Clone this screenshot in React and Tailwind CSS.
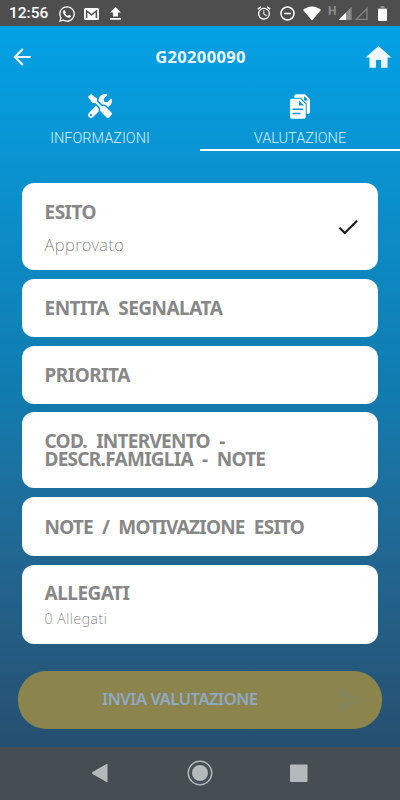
import { MdArrowBack, MdHome, MdCheck, MdSend, MdAlarm } from 'react-icons/md';
import { FaTools, FaWhatsapp } from 'react-icons/fa';

const cards = [
  { title: 'ESITO', text: 'Approvato', height: 'h-[87px]', checked: true, spacing: 'tracking-[-0.5px]' },
  { title: 'ENTITA SEGNALATA', height: 'h-[58px]', spacing: 'tracking-[-0.5px]' },
  { title: 'PRIORITA', height: 'h-[58px]', spacing: 'tracking-[-0.5px]' },
  { title: 'COD. INTERVENTO -\nDESCR.FAMIGLIA - NOTE', height: 'h-[76px]', spacing: 'tracking-[-0.72px]' },
  { title: 'NOTE / MOTIVAZIONE ESITO', height: 'h-[59px]', spacing: 'tracking-[-0.78px]' },
  { title: 'ALLEGATI', text: '0 Allegati', height: 'h-[79px]', small: true, spacing: 'tracking-[-0.5px]' },
];

function StatusBar() {
  return (
    <div className="h-[26px] shrink-0 bg-[#4e4e4e] text-white flex items-center justify-between pl-[9px] pr-[13px]">
      <div className="flex items-center">
        <span className="w-[49px] font-['Roboto',sans-serif] font-medium text-[15.500px] leading-none pt-[2px]">12:56</span>
        <FaWhatsapp size={18} className="mt-px" />
        <svg width="15" height="12" viewBox="0 0 15 12" className="ml-[8px] mt-px">
          <rect width="15" height="12" rx="1.5" fill="#fff" />
          <path d="M2.600 10V3l4.900 3.800L12.400 3v7" fill="none" stroke="#4e4e4e" strokeWidth="1.500" />
        </svg>
        <svg width="11" height="13" viewBox="0 0 11 13" fill="#fff" className="ml-[11px]">
          <path d="M5.5 0 11 5.5H8V9.5H3V5.5H0zM0 11h11v1.7H0z" />
        </svg>
      </div>
      <div className="flex items-center">
        <MdAlarm size={16} />
        <svg width="15" height="15" viewBox="0 0 15 15" fill="none" stroke="#fff" strokeWidth="1.5" className="ml-[8px]">
          <circle cx="7.5" cy="7.5" r="6.5" />
          <path d="M4 7.5h7" />
        </svg>
        <svg width="18" height="15" viewBox="0 0 18 15" fill="#fff" className="ml-[8px]">
          <path d="M0 4C5-.7 13-.7 18 4L9 14.5z" />
        </svg>
        <span className="ml-[7px] mb-[5px] w-[9px] font-['Roboto',sans-serif] font-bold text-[12px] leading-none text-[#8d8d8d]">H</span>
        <svg width="31" height="15" viewBox="0 0 31 15" className="ml-px">
          <path d="M13.5.8V14H.5z" fill="#8d8d8d" />
          <path d="M8 6.4V14H.5z" fill="#fff" />
          <path d="M29 2.5V13.4H18.3z" fill="none" stroke="#838383" strokeWidth="1.3" />
        </svg>
        <svg width="9" height="15" viewBox="0 0 9 15" className="ml-[9px]">
          <path d="M2.5 0h4v2H9v2H0V2h2.5z" fill="#8d8d8d" />
          <rect y="3" width="9" height="12" rx="1" fill="#fff" />
        </svg>
      </div>
    </div>
  );
}

function DocumentsIcon() {
  return (
    <svg width="20" height="25" viewBox="0 0 20 25">
      <path d="M6 .3h9l5 5V18a2 2 0 0 1-2 2h-1.300V9.500L10.700 3.800H4.300V2A1.700 1.700 0 0 1 6 .3z" fill="#fff" />
      <path d="M14 2v4.500h4.500z" fill="#0997d6" />
      <path d="M1.700 4.800h8.500l5.500 5.500V23a1.700 1.700 0 0 1-1.700 1.700H1.700A1.700 1.700 0 0 1 0 23V6.500a1.700 1.700 0 0 1 1.700-1.700z" fill="#fff" />
      <path d="M9 6.500v5h5z" fill="#0997d6" />
      <path d="M2.500 15.300h10.500M2.500 19.500h8" stroke="#0997d6" strokeWidth="1.400" />
    </svg>
  );
}

function Tabs() {
  return (
    <div className="flex h-[63px] text-[#d6eefb] font-['Roboto',sans-serif] font-light text-[14.500px]">
      <div className="flex-1 flex flex-col items-center pt-[6px]">
        <FaTools size={24} color="#fff" />
        <span className="mt-[13px] leading-[16px]">INFORMAZIONI</span>
      </div>
      <div className="flex-1 flex flex-col items-center pt-[6px] border-b-2 border-white">
        <DocumentsIcon />
        <span className="mt-[12px] leading-[16px]">VALUTAZIONE</span>
      </div>
    </div>
  );
}

function Card({ card }) {
  return (
    <div className={`${card.height} bg-white rounded-[12px] flex items-center justify-between pl-[22.500px] pr-[17px]`}>
      <div className={card.text ? 'pt-[4px]' : ''}>
        <h2 className={`font-['Noto_Sans',sans-serif] font-bold text-[19px] leading-[18px] text-[#878787] [word-spacing:5px] whitespace-pre ${card.spacing}`}>
          {card.title}
        </h2>
        {card.text && (
          <p
            className={`font-['Noto_Sans',sans-serif] font-extralight text-[#6f6f6f] ${
              card.small ? 'text-[14px] leading-[18px] mt-[8px] tracking-[0.6px]' : 'text-[16.500px] leading-[20px] mt-[14px] tracking-[0.5px]'
            }`}
          >
            {card.text}
          </p>
        )}
      </div>
      {card.checked && <MdCheck size={26} color="#1d1d1d" />}
    </div>
  );
}

function NavBar() {
  return (
    <div className="h-[53.500px] shrink-0 bg-[#464e53] flex items-center justify-center pb-[1px]">
      <svg width="216" height="26" viewBox="0 0 216 26" fill="#b4b9bb">
        <path d="M.5 12 14.500 4q1-.5 1 .5v17q0 1-1 .5L.5 14q-1-1 0-2z" />
        <circle cx="108" cy="13" r="11.700" fill="none" stroke="#b4b9bb" strokeWidth="1.500" />
        <circle cx="108" cy="13" r="8" />
        <rect x="198" y="4.500" width="17.500" height="17.500" rx="1" />
      </svg>
    </div>
  );
}

export default function App() {
  return (
    <div className="w-[400px] h-[800px] flex flex-col overflow-hidden">
      <StatusBar />
      <div className="flex-1 flex flex-col bg-linear-to-b from-[#02a1e5] via-[#107cb0] to-[#264f70]">
        <header className="h-[62px] flex items-center justify-between pl-[12px] pr-[6px] text-[#f0f8ff]">
          <MdArrowBack size={26} className="w-[30px] -ml-[5px]" />
          <h1 className="font-['Noto_Sans',sans-serif] font-bold text-[16.500px] tracking-[0.35px] pl-[1px]">G20200090</h1>
          <MdHome size={31} />
        </header>
        <Tabs />
        <main className="flex flex-col gap-[8.700px] px-[22px] pt-[32.300px]">
          {cards.map((card) => (
            <Card key={card.title} card={card} />
          ))}
        </main>
        <button className="mt-[27px] mx-[18px] h-[58px] shrink-0 rounded-[28px] bg-[#8b844c] text-[#8fa9c4] flex items-center pl-[84px] pr-[15px]">
          <span className="flex-1 text-left font-['Noto_Sans',sans-serif] font-semibold text-[16.500px] tracking-[-0.450px] whitespace-nowrap">INVIA VALUTAZIONE</span>
          <MdSend size={32} color="#84865a" className="shrink-0" />
        </button>
      </div>
      <NavBar />
    </div>
  );
}
